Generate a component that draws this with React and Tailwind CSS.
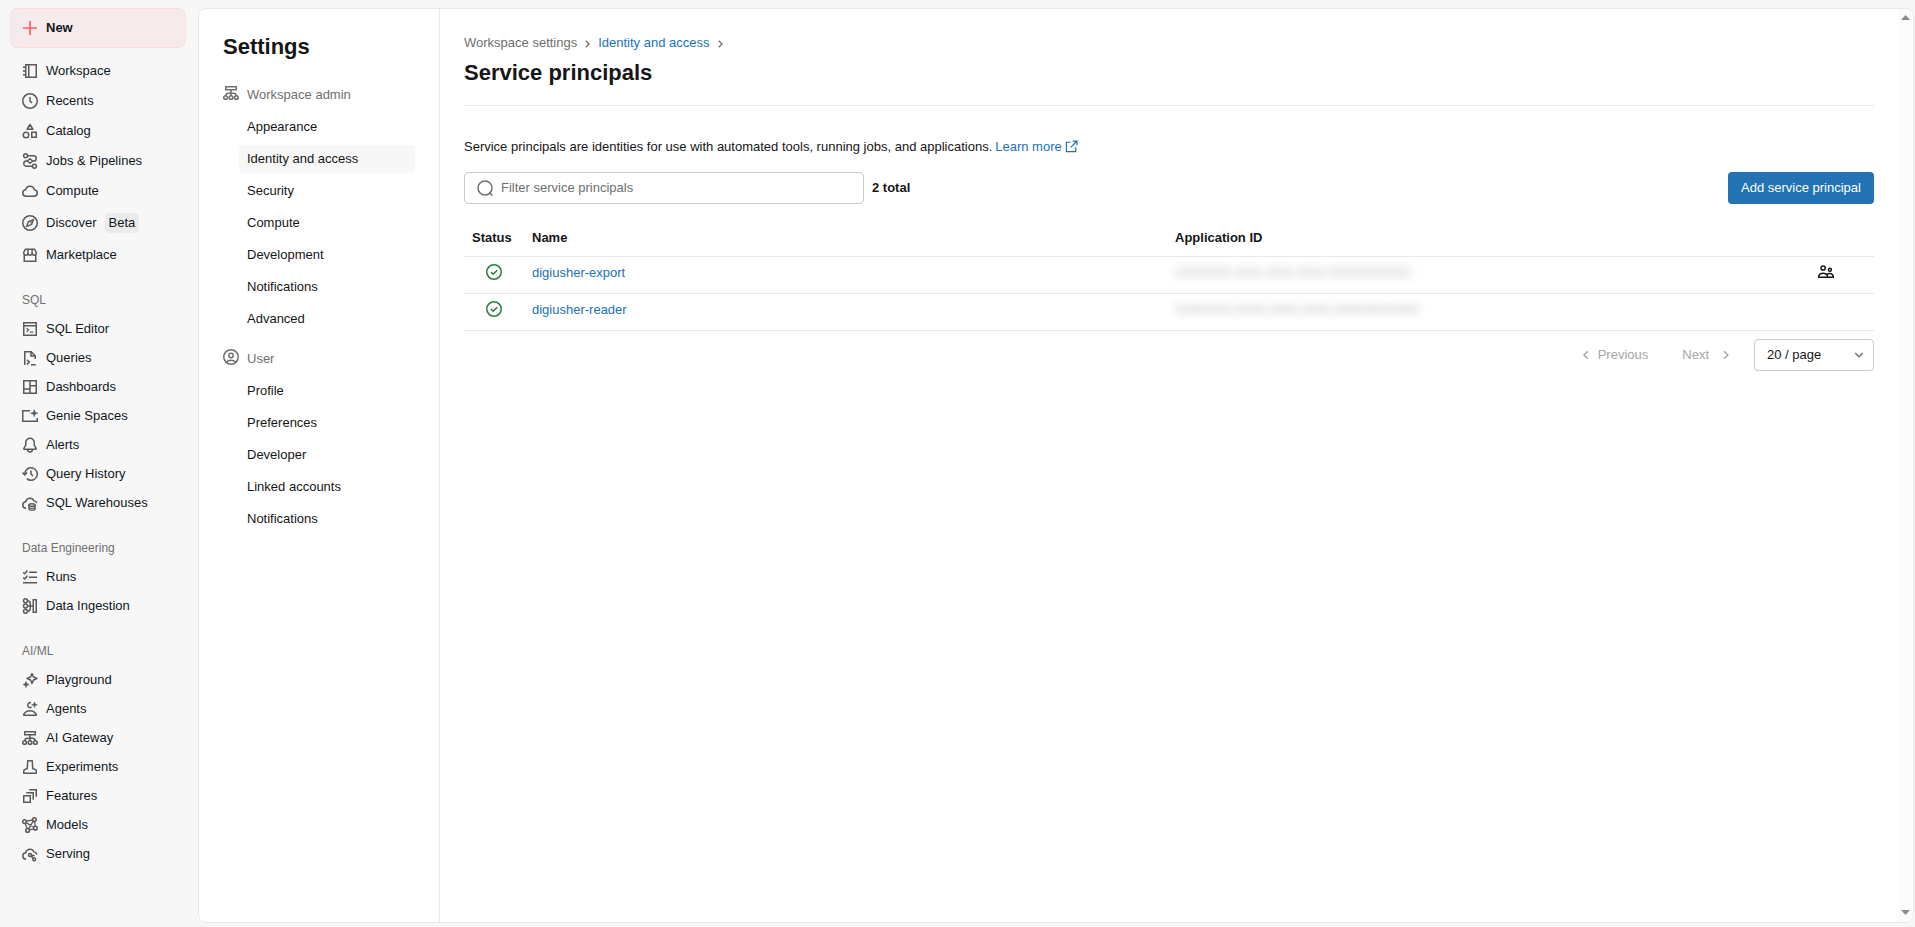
import React from "react";

const Svg = ({ children, size = 16, className = "" }) => (
  <svg width={size} height={size} viewBox="0 0 16 16" fill="none" stroke="currentColor" strokeWidth="1.5" className={`shrink-0 ${className}`}>
    {children}
  </svg>
);
const F = { fill: "currentColor", stroke: "none" };

const icons = {
  workspace: (
    <>
      <path d="M3.75 1.75h10.5v12.5H3.75zM6.75 1.75v12.5" />
      <path d="M1 4.25h2.5M1 8h2.5M1 11.75h2.5" />
    </>
  ),
  recents: (
    <>
      <circle cx="8" cy="8" r="7.25" />
      <path d="M8 4v4l2 2.1" />
    </>
  ),
  catalog: (
    <>
      <path d="M8 1.5 10.9 6.25H5.1z" strokeLinejoin="round" />
      <circle cx="4" cy="12" r="2.75" />
      <path d="M9.75 9.25h4.5v5h-4.5z" />
    </>
  ),
  jobs: (
    <>
      <circle cx="3.6" cy="2.75" r="1.95" />
      <circle cx="12.4" cy="13.25" r="1.95" />
      <path d="M5.5 2.75h6.1a2.6 2.6 0 0 1 0 5.25h-1M10.5 13.25H4.4a2.6 2.6 0 0 1 0-5.25h1" />
      <path d="M8 5.7 10.7 8 8 10.3 5.3 8z" strokeLinejoin="round" />
    </>
  ),
  compute: <path d="M4 13.25a3.25 3.25 0 0 1-.3-6.48 4.4 4.4 0 0 1 8.6 0 3.25 3.25 0 0 1-.3 6.48z" strokeLinejoin="round" />,
  discover: (
    <>
      <circle cx="8" cy="8" r="7.25" />
      <path d="M11.4 4.6 9.7 9.4 4.6 11.4l1.9-5z" strokeWidth="1.3" />
      <path d="M6.4 6.4 9.6 9.6l2-5.2z" {...F} opacity=".65" />
    </>
  ),
  market: (
    <>
      <path d="M3.4 2.25h9.2L14.25 5.5v.6a2.05 2.05 0 0 1-4.15 0 2.05 2.05 0 0 1-4.2 0 2.05 2.05 0 0 1-4.15 0v-.6z" />
      <path d="M2.25 8v6.25h11.5V8M5.9 6V2.5M10.1 6V2.5" />
    </>
  ),
  sqlEditor: (
    <>
      <path d="M1.75 1.75h12.5v12.5H1.75zM1.75 4.75h12.5" />
      <path d="m4.6 7.2 1.9 1.8-1.9 1.8M8 11.2h3.2" strokeWidth="1.3" />
    </>
  ),
  queries: (
    <>
      <path d="M2.75 15V1.75h6.5l4 4V9M9 1.75v4.2h4.2" />
      <path d="m5 9.8 2.3 2.3L5 14.4M9 14.75h4.8" />
    </>
  ),
  dashboards: <path d="M1.75 1.75h12.5v12.5H1.75zM8 1.75v12.5M1.75 10H8M8 6.75h6.25" />,
  genie: (
    <>
      <path d="M8 2.75H.75v10.5h14.5V10" />
      <path d="m12.2 1.6.9 2.6 2.7 1-2.7 1-.9 2.6-.9-2.6-2.7-1 2.7-1z" {...F} stroke="currentColor" strokeWidth=".5" />
    </>
  ),
  alerts: (
    <>
      <path d="M8 1.25a4.25 4.25 0 0 0-4.25 4.25v2.6L1.9 11.3v.95h12.2v-.95l-1.85-3.2V5.5A4.25 4.25 0 0 0 8 1.25z" strokeLinejoin="round" />
      <path d="M5.6 12.5a2.4 2.4 0 0 0 4.8 0" />
    </>
  ),
  history: (
    <>
      <path d="M2.75 8.6V8a6.25 6.25 0 1 1 2 4.6M9 4.4V8l2 2.1" />
      <path d="M.5 6.6 2.75 9 5 6.6" />
    </>
  ),
  warehouses: (
    <>
      <path d="M4 13.25a3.25 3.25 0 0 1-.3-6.48 4.4 4.4 0 0 1 8.3-.9 3.6 3.6 0 0 1 2.9 2.2" />
      <ellipse cx="10" cy="10" rx="3.1" ry="1.25" />
      <path d="M6.9 10v3.9c0 .7 1.4 1.3 3.1 1.3s3.1-.6 3.1-1.3V10M6.9 12.1c0 .7 1.4 1.2 3.1 1.2s3.1-.5 3.1-1.2" strokeWidth="1.3" />
    </>
  ),
  runs: <path d="M7 3.25h8M7 8.25h8M1 13.75h14M1.2 3.4 2.7 4.7 5.4 1.6M1.2 8.6 2.7 9.9 5.4 6.8" />,
  ingestion: (
    <>
      <circle cx="3.5" cy="2.7" r="1.95" />
      <circle cx="3.5" cy="8" r="1.95" />
      <circle cx="3.5" cy="13.3" r="1.95" />
      <path d="M5.5 2.75q2.75 0 2.75 3v4.5q0 3-2.75 3M5.5 8h5.75M11.25 4.75v-3h3v12.5h-3v-3M11.25 4.5v7" />
    </>
  ),
  playground: (
    <>
      <path d="M10 1.6 11.5 5 15 6.5 11.5 8 10 11.4 8.5 8 5 6.5 8.5 5z" strokeLinejoin="round" />
      <path d="m4 9.4.9 2.2 2.2.9-2.2.9L4 15.6l-.9-2.2-2.2-.9 2.2-.9z" {...F} stroke="currentColor" strokeWidth=".5" />
    </>
  ),
  agents: (
    <>
      <path d="M8.9 1.75a2.5 2.5 0 1 0 .9 4.3" />
      <path d="m12.5 1 .8 2 2 .8-2 .8-.8 2-.8-2-2-.8 2-.8z" {...F} stroke="currentColor" strokeWidth=".5" />
      <path d="M1.75 14.25v-.9C3.1 11.1 5.4 9.75 8 9.75s4.9 1.35 6.25 3.6v.9z" strokeLinejoin="round" />
    </>
  ),
  gateway: (
    <>
      <path d="M5.75 4.75h-3v-3h10.5v3h-3M5 4.75h6M8 4.75V11M2.6 11c.2-1.6 1.4-2.7 3-2.7h4.8c1.6 0 2.8 1.1 3 2.7" />
      <circle cx="2.6" cy="12.5" r="1.85" />
      <circle cx="8" cy="12.5" r="1.85" />
      <circle cx="13.4" cy="12.5" r="1.85" />
    </>
  ),
  experiments: (
    <path d="M5.75 1.75h4.5l.5 7.9 2.5.9c.6.2 1 .8 1 1.4v2.3H1.75v-2.3c0-.6.4-1.2 1-1.4l2.5-.9z" strokeLinejoin="round" />
  ),
  features: <path d="M1.75 7.75h6.5v6.5h-6.5zM4.25 4.75h7v7M7.25 1.75h7v7" />,
  models: (
    <>
      <circle cx="2.6" cy="4.6" r="1.85" />
      <circle cx="12.4" cy="2.6" r="1.85" />
      <circle cx="13.4" cy="11.2" r="1.85" />
      <circle cx="5.6" cy="13.4" r="1.85" />
      <path d="M4.4 4.2 10.6 3M12.6 4.5l.6 4.9M11.7 11.8l-4.3 1.1M3.2 6.4l1.8 5.2M4.1 5.6l7.8 4.6M11.2 4.1 6.7 11.9" strokeWidth="1.3" />
    </>
  ),
  serving: (
    <>
      <path d="M4 13.25a3.25 3.25 0 0 1-.3-6.48 4.4 4.4 0 0 1 8.3-.9 3.6 3.6 0 0 1 2.9 2.6" />
      <circle cx="8" cy="8.9" r="1.5" />
      <circle cx="12.2" cy="13.5" r="1.4" />
      <path d="m9 10 2.2 2.5M9.4 9.2l3.2.6" />
    </>
  ),
  user: (
    <>
      <circle cx="8" cy="8" r="7.25" />
      <circle cx="8" cy="6.5" r="2.2" />
      <path d="M3.2 13.2C4.4 11.9 6.1 11.2 8 11.2s3.6.7 4.8 2" />
    </>
  ),
};

const topNav = [
  ["workspace", "Workspace"],
  ["recents", "Recents"],
  ["catalog", "Catalog"],
  ["jobs", "Jobs & Pipelines"],
  ["compute", "Compute"],
];
const groups = [
  ["SQL", [["sqlEditor", "SQL Editor"], ["queries", "Queries"], ["dashboards", "Dashboards"], ["genie", "Genie Spaces"], ["alerts", "Alerts"], ["history", "Query History"], ["warehouses", "SQL Warehouses"]]],
  ["Data Engineering", [["runs", "Runs"], ["ingestion", "Data Ingestion"]]],
  ["AI/ML", [["playground", "Playground"], ["agents", "Agents"], ["gateway", "AI Gateway"], ["experiments", "Experiments"], ["features", "Features"], ["models", "Models"], ["serving", "Serving"]]],
];

const NavItem = ({ icon, label, height = "h-[29px]", children }) => (
  <a className={`flex items-center gap-2 pl-3 ${height}`}>
    <Svg className="text-[#5a5a5a]">{icons[icon]}</Svg>
    <span>{label}</span>
    {children}
  </a>
);

const Sidebar = () => (
  <nav className="w-[198px] shrink-0 pl-2.5 pt-2 text-[#11171c]">
    <button className="flex h-10 w-[176px] items-center gap-2 rounded-lg border border-[#f9dcdd] bg-[#f7eaea] pl-[11px] font-bold">
      <Svg className="text-[#ff5f5f]"><path d="M8 1v14M1 8h14" strokeWidth="1.7" /></Svg>
      New
    </button>
    <div className="mt-2">
      {topNav.map(([i, l]) => <NavItem key={l} icon={i} label={l} height="h-[30px]" />)}
      <NavItem icon="discover" label="Discover" height="h-[34px]">
        <span className="h-5 rounded bg-[#ebebeb] px-1 leading-5">Beta</span>
      </NavItem>
      <NavItem icon="market" label="Marketplace" height="h-[30px]" />
    </div>
    <div className="mt-5">
      {groups.map(([title, items]) => (
        <section key={title} className="mb-[21px]">
          <h3 className="mb-1 h-5 pl-3 text-xs leading-5 text-[#6f6f6f]">{title}</h3>
          {items.map(([i, l]) => <NavItem key={l} icon={i} label={l} />)}
        </section>
      ))}
    </div>
  </nav>
);

const SettingsGroup = ({ icon, title, items, active }) => (
  <section className="mb-3">
    <h3 className="flex h-7 gap-2 text-[#6f6f6f]">
      <Svg className="mt-1">{icons[icon]}</Svg>
      <span className="leading-7">{title}</span>
    </h3>
    <ul className="ml-4 mt-1 flex flex-col gap-1">
      {items.map((l) => (
        <li key={l} className={`h-7 rounded pl-2 leading-7 ${l === active ? "bg-[#f7f7f7]" : ""}`}>{l}</li>
      ))}
    </ul>
  </section>
);

const SettingsNav = () => (
  <aside className="w-[241px] shrink-0 border-r border-[#e8e8e8] px-6 pt-6">
    <h2 className="mb-5 text-[22px] font-bold leading-7">Settings</h2>
    <SettingsGroup
      icon="gateway"
      title="Workspace admin"
      active="Identity and access"
      items={["Appearance", "Identity and access", "Security", "Compute", "Development", "Notifications", "Advanced"]}
    />
    <SettingsGroup icon="user" title="User" items={["Profile", "Preferences", "Developer", "Linked accounts", "Notifications"]} />
  </aside>
);

const Chevron = ({ d = "m6 4.2 3.8 3.8L6 11.8", className = "" }) => (
  <Svg className={className}><path d={d} /></Svg>
);

const rows = [
  { name: "digiusher-export", id: "00000000-0000-0000-0000-000000000000", idClass: "w-[236px] tracking-[-0.35px] blur-[5px]", managed: true },
  { name: "digiusher-reader", id: "00000000-0000-0000-0000-000000000000", idClass: "w-[244px] tracking-[-0.13px] blur-[4px]", managed: false },
];

const Main = () => (
  <main className="flex min-w-0 flex-1 flex-col px-6">
    <div className="mt-6 flex h-5 items-center leading-5">
      <span className="text-[#6f6f6f]">Workspace settings</span>
      <Chevron className="mx-[3px] mt-px !h-[14px] !w-[15px] text-[#6f6f6f]" />
      <a className="text-[#2272b4]">Identity and access</a>
      <Chevron className="mx-[3px] mt-px !h-[14px] !w-[15px] text-[#6f6f6f]" />
    </div>
    <h1 className="mt-1.5 text-[22px] font-bold leading-7">Service principals</h1>
    <div className="mt-[18px] border-t border-[#e8e8e8]" />
    <p className="mt-[31px] flex h-5 items-center leading-5">
      Service principals are identities for use with automated tools, running jobs, and applications.
      <a className="ml-[3px] flex items-center text-[#2272b4]">
        Learn more
        <Svg size={13} className="-mt-px ml-[3px]">
          <path d="M7 2.75H1.75v11.5h11.5V9M9.5 1.25h5.25V6.5M14.5 1.5 7 9" />
        </Svg>
      </a>
    </p>
    <div className="mt-[15px] flex h-8 items-center">
      <div className="flex h-8 w-[400px] items-center rounded border border-[#cbcbcb] pl-3 text-[#6f6f6f]">
        <Svg className="mr-2"><circle cx="8" cy="8" r="7" /><path d="m12.2 12.4 3.2 3.1" /></Svg>
        Filter service principals
      </div>
      <span className="ml-2 font-bold">2 total</span>
      <button className="ml-auto h-8 w-[146px] rounded bg-[#2272b4] text-white">Add service principal</button>
    </div>
    <div className="mt-4">
      <div className="grid h-[37px] grid-cols-[60px_643px_1fr_56px] items-center border-b border-[#e8e8e8] pl-2 font-bold">
        <span>Status</span><span>Name</span><span>Application ID</span><span />
      </div>
      {rows.map((r) => (
        <div key={r.name} className="grid h-[37px] grid-cols-[60px_643px_1fr_56px] items-center border-b border-[#e8e8e8] pl-2">
          <Svg className="-mt-1.5 ml-3.5 text-[#277c43]">
            <circle cx="8" cy="8" r="7.25" /><path d="m5 8 2.2 2.2L11.2 6.2" />
          </Svg>
          <a className="-mt-1 text-[#2272b4]">{r.name}</a>
          <span className={`-mt-1 select-none overflow-visible whitespace-nowrap text-[#8a8a8a] opacity-60 ${r.idClass}`}>{r.id}</span>
          {r.managed ? (
            <Svg className="-mt-1.5 text-[#161616]">
              <circle cx="5.1" cy="4" r="2.1" />
              <circle cx="11.9" cy="5.8" r="1.5" />
              <path d="M.75 13.25v-1.5C1.6 9.9 3.2 9.2 5.1 9.2c2 0 3.6.8 4.4 2.6v1.45zM9 9.9c.8-.4 1.6-.5 2.6-.5 1.8 0 3.1.9 3.65 2.5v1.35H9.5" />
            </Svg>
          ) : <span />}
        </div>
      ))}
    </div>
    <div className="mt-2 flex h-8 items-center justify-end text-[#a6a6a6]">
      <Chevron d="M9.8 4.2 6 8l3.8 3.8" className="mr-1" />
      <span>Previous</span>
      <span className="ml-[34px]">Next</span>
      <Chevron className="ml-[9px]" />
      <div className="ml-5 flex h-8 w-[120px] items-center justify-between rounded border border-[#cbcbcb] pl-3 pr-1.5 text-[#161616]">
        20 / page
        <Chevron d="M4.2 6 8 9.8 11.8 6" className="text-[#6f6f6f]" />
      </div>
    </div>
  </main>
);

const ScrollTrack = () => (
  <div className="flex w-[15px] shrink-0 flex-col items-center justify-between rounded-r-lg bg-[#fcfcfc] pb-[7px] pt-1.5 text-[#8b8b8b]">
    <svg width="9" height="5" viewBox="0 0 9 5" fill="currentColor"><path d="M4.5 0 9 5H0z" /></svg>
    <svg width="9" height="5" viewBox="0 0 9 5" fill="currentColor"><path d="M0 0h9L4.5 5z" /></svg>
  </div>
);

export default function App() {
  return (
    <div className="flex h-[927px] w-[1915px] overflow-hidden bg-[#f7f7f7] font-['Liberation_Sans',Arial,sans-serif] text-[13px] leading-5 text-[#161616]">
      <Sidebar />
      <div className="mb-1 mr-px mt-2 flex min-w-0 flex-1 rounded-lg border border-[#e8e8e8] bg-white">
        <SettingsNav />
        <Main />
        <ScrollTrack />
      </div>
    </div>
  );
}
